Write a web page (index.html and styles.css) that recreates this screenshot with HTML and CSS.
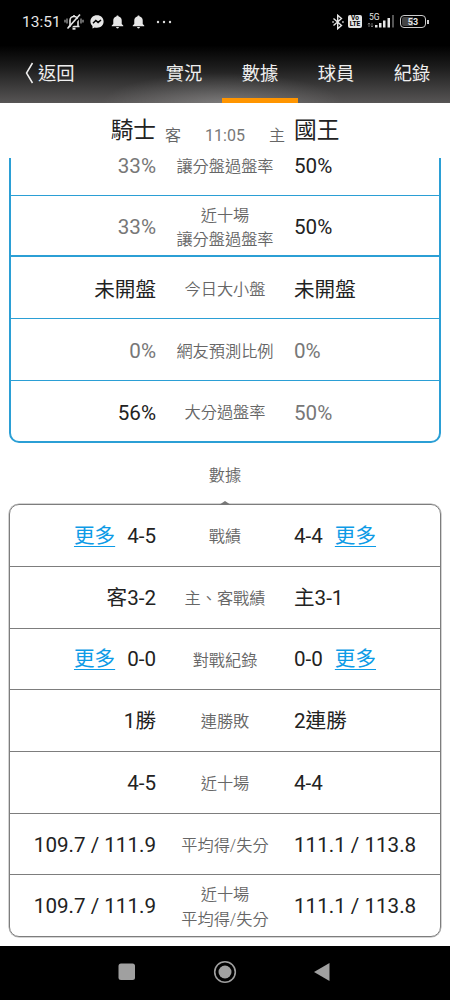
FILE: index.html
```
<!DOCTYPE html>
<html lang="zh-Hant">
<head>
    <meta charset="utf-8">
    <title>騎士 - 國王 數據</title>
    <link rel="stylesheet" href="styles.css">
</head>
<body>
    <header class="top">
        <div class="status-bar">
            <span class="clock">13:51</span>
            <svg class="ico-mute" width="20" height="18" viewBox="0 0 20 18" fill="none" stroke="#e6e6e6" stroke-width="1.6">
                <path d="M4.5 13.5h11M6 13V7.5a4 4 0 0 1 8 0V13M10 3.5V2"/>
                <path d="M8.5 15.7h3" stroke-width="2"/>
                <path d="M3 5.5v5M1 6.8v2.6M17 5.5v5M19 6.8v2.6" stroke-width="1.2" stroke="#aaa"/>
                <path d="M17.5 2.5L5 16.5" stroke="#000"/>
                <path d="M16 1.5L3.5 15.5"/>
            </svg>
            <svg class="ico-msg" width="14" height="14" viewBox="0 0 14 14">
                <path fill="#e6e6e6" d="M7 .3C3.1.3.4 3 .4 6.5c0 1.9.8 3.4 2.1 4.5v2.5l2.2-1.1c.7.2 1.5.3 2.3.3 3.9 0 6.6-2.7 6.6-6.2S10.9.3 7 .3z"/>
                <path fill="none" stroke="#000" stroke-width="1.5" d="M3 8.2l2.8-2.8 2.3 2L11 5"/>
            </svg>
            <svg class="ico-bell" width="13" height="14" viewBox="0 0 12 14" preserveAspectRatio="none" fill="#e6e6e6">
                <path d="M6 .5c.7 0 1 .4 1 1 2 .5 2.9 2 2.9 4V9l1.4 1.5v.8H.7v-.8L2.1 9V5.5c0-2 .9-3.5 2.9-4 0-.6.3-1 1-1zM4.7 12.1h2.6c0 .8-.5 1.300-1.300 1.300s-1.300-.5-1.300-1.300z"/>
            </svg>
            <svg class="ico-bell" width="13" height="14" viewBox="0 0 12 14" preserveAspectRatio="none" fill="#e6e6e6">
                <path d="M6 .5c.7 0 1 .4 1 1 2 .5 2.9 2 2.9 4V9l1.4 1.5v.8H.7v-.8L2.1 9V5.5c0-2 .9-3.5 2.9-4 0-.6.3-1 1-1zM4.7 12.1h2.6c0 .8-.5 1.300-1.300 1.300s-1.300-.5-1.300-1.300z"/>
            </svg>
            <svg class="ico-dots" width="16" height="4" viewBox="0 0 16 4" fill="#ddd">
                <circle cx="2" cy="2" r="1.2"/><circle cx="8" cy="2" r="1.2"/><circle cx="14" cy="2" r="1.2"/>
            </svg>
            <div class="status-right">
                <svg width="12" height="16" viewBox="0 0 12 16" fill="none" stroke="#e6e6e6" stroke-width="1.4">
                    <path d="M1.5 4.5l8 7-3.800 3.200V1.300l3.800 3.200-8 7"/>
                    <path d="M.3 8h1.500M10.200 8h1.500" stroke-width="1.500"/>
                </svg>
                <div class="volte"><span>Vo</span><span>LTE</span></div>
                <div class="signal">
                    <span class="net">5G</span>
                    <svg width="28" height="13" viewBox="0 0 28 13" fill="#e6e6e6">
                        <path d="M2 12V8M.8 9.300L2 8l1.200 1.300M5 8v4M3.900 10.800L5 12l1.200-1.200" fill="none" stroke="#888" stroke-width=".8"/>
                        <rect x="8" y="10" width="2.5" height="2.5"/>
                        <rect x="12" y="8" width="2.5" height="4.5"/>
                        <rect x="16" y="5.5" width="2.5" height="7"/>
                        <rect x="20.5" y="3" width="2.5" height="9.5"/>
                        <rect x="25" y="0" width="2" height="12.5" fill="#555"/>
                    </svg>
                </div>
                <div class="battery"><span>53</span></div>
            </div>
        </div>
        <nav class="nav">
            <a class="back">
                <svg width="9" height="22" viewBox="0 0 9 22" fill="none" stroke="#eee" stroke-width="1.5"><path d="M7.500 1L1.500 11l6 10"/></svg>
                返回
            </a>
            <a class="tab">實況</a>
            <a class="tab active">數據</a>
            <a class="tab">球員</a>
            <a class="tab">紀錄</a>
        </nav>
    </header>

    <section class="match">
        <div class="team away">騎士</div>
        <div class="info"><span>客</span><span class="time">11:05</span><span>主</span></div>
        <div class="team home">國王</div>
    </section>

    <main class="content">
        <div class="panel blue">
            <div class="row"><div class="away dim">33%</div><div class="label">讓分盤過盤率</div><div class="home">50%</div></div>
            <div class="row thick"><div class="away dim">33%</div><div class="label">近十場<br>讓分盤過盤率</div><div class="home">50%</div></div>
            <div class="row"><div class="away">未開盤</div><div class="label">今日大小盤</div><div class="home">未開盤</div></div>
            <div class="row"><div class="away dim">0%</div><div class="label">網友預測比例</div><div class="home dim">0%</div></div>
            <div class="row"><div class="away">56%</div><div class="label">大分過盤率</div><div class="home dim">50%</div></div>
        </div>

        <h2 class="title">數據</h2>

        <div class="panel gray">
            <div class="row"><div class="away"><a class="more">更多</a>4-5</div><div class="label">戰績</div><div class="home">4-4<a class="more">更多</a></div></div>
            <div class="row"><div class="away">客3-2</div><div class="label">主、客戰績</div><div class="home">主3-1</div></div>
            <div class="row"><div class="away"><a class="more">更多</a>0-0</div><div class="label">對戰紀錄</div><div class="home">0-0<a class="more">更多</a></div></div>
            <div class="row"><div class="away">1勝</div><div class="label">連勝敗</div><div class="home">2連勝</div></div>
            <div class="row"><div class="away">4-5</div><div class="label">近十場</div><div class="home">4-4</div></div>
            <div class="row"><div class="away">109.7 / 111.9</div><div class="label">平均得/失分</div><div class="home">111.1 / 113.8</div></div>
            <div class="row"><div class="away">109.7 / 111.9</div><div class="label">近十場<br>平均得/失分</div><div class="home">111.1 / 113.8</div></div>
        </div>
    </main>

    <footer class="system-nav">
        <svg width="18" height="18" viewBox="0 0 18 18"><rect x=".5" y=".5" width="16.5" height="16.5" rx="2.5" fill="#a0a0a0"/></svg>
        <svg width="24" height="24" viewBox="0 0 24 24"><circle cx="12" cy="12" r="10.3" fill="none" stroke="#a0a0a0" stroke-width="1.6"/><circle cx="12" cy="12" r="6.5" fill="#a0a0a0"/></svg>
        <svg width="18" height="20" viewBox="0 0 18 20"><path d="M16.5 1v18L1 10z" fill="#a0a0a0"/></svg>
    </footer>
</body>
</html>
```
FILE: styles.css
```
* {
    box-sizing: border-box;
}
body {
    margin: 0;
    height: 1000px;
    display: flex;
    flex-direction: column;
    overflow: hidden;
    background: #fff;
    color: #222;
    font-family: Roboto, "Noto Sans CJK TC", sans-serif;
}
svg {
    display: block;
    flex: none;
}
.top {
    height: 103px;
    flex: none;
    background:
        radial-gradient(ellipse 120px 30px at 222px 103px, rgba(255, 255, 255, 0.22), transparent),
        linear-gradient(#000 44%, #1c1c1c 65%, #575555);
}
.status-bar {
    height: 43px;
    padding: 0 24px 0 22px;
    display: flex;
    align-items: center;
    color: #e6e6e6;
}
.clock {
    width: 42px;
    font-size: 15.5px;
}
.ico-msg {
    margin-left: 6px;
}
.ico-bell {
    margin-left: 7px;
}
.ico-bell + .ico-bell {
    margin-left: 8px;
}
.ico-dots {
    margin-left: 11px;
}
.status-right {
    margin-left: auto;
    margin-right: -1px;
    display: flex;
    align-items: center;
}
.volte {
    width: 14px;
    height: 13px;
    margin-left: 4px;
    border-radius: 2px;
    background: #e6e6e6;
    color: #000;
    font-size: 6.5px;
    font-weight: 700;
    line-height: 6px;
    display: flex;
    flex-direction: column;
    align-items: center;
}
.signal {
    position: relative;
    margin-left: 5px;
}
.net {
    position: absolute;
    left: 2px;
    top: -2px;
    font-size: 8.5px;
    line-height: 8px;
}
.battery {
    position: relative;
    width: 26px;
    height: 13px;
    margin-left: 5px;
    margin-right: 1px;
    border: 1px solid #ccc;
    border-radius: 4px;
    background: linear-gradient(90deg, #444 50%, #000 50%);
    background-clip: content-box;
    padding: 1px;
    font-size: 9px;
    font-weight: 700;
    line-height: 10px;
    text-align: center;
}
.battery::after {
    content: "";
    position: absolute;
    right: -4px;
    top: 4px;
    width: 2px;
    height: 4px;
    background: #ccc;
}
.nav {
    height: 60px;
    display: flex;
    color: #eee;
    font-size: 18.3px;
    line-height: 61px;
}
.back {
    flex: 1;
    padding-left: 25px;
    display: flex;
    align-items: center;
    gap: 4px;
}
.tab {
    width: 76px;
    text-align: center;
}
.active {
    border-bottom: 5px solid #ff9500;
}
.match,
.row {
    display: grid;
    grid-template-columns: 1fr 138px 1fr;
    align-items: center;
}
.away {
    text-align: right;
}
.match {
    height: 55px;
    flex: none;
}
.team {
    font-size: 22.7px;
    line-height: 55px;
}
.info {
    padding: 6px 9px 0;
    display: flex;
    align-items: baseline;
    justify-content: space-between;
    font-size: 16px;
    font-weight: 350;
    color: #666;
}
.time {
    font-weight: 400;
    color: #777;
}
.content {
    flex: 1;
    padding: 0 9px;
    overflow: hidden;
}
.panel {
    border: 2px solid;
    border-radius: 10px;
}
.row {
    height: 61.7px;
    padding-top: 1px;
    border-bottom: 1px solid;
    border-color: inherit;
    font-size: 20.6px;
    line-height: 24px;
}
.row:last-child {
    border-bottom: 0;
    height: 60px;
}
.label {
    padding-top: 3px;
    text-align: center;
    font-size: 16.2px;
    line-height: 24.5px;
    font-weight: 350;
    color: #666;
    white-space: nowrap;
}
.dim {
    color: #777;
}
.blue {
    margin-top: -26.2px;
    border-color: #2b9fd5;
}
.blue .row {
    padding-top: 4px;
}
.blue .label {
    padding-top: 2px;
}
.thick {
    border-bottom-width: 2px;
}
.gray {
    position: relative;
    border: 1px solid #7d7d7d;
    box-shadow: 0 0 0 0.5px #aaa;
}
.gray .row:last-child {
    height: 61px;
}
.gray::before {
    content: "";
    position: absolute;
    left: 50%;
    top: -4px;
    margin-left: -6px;
    border: 6px solid transparent;
    border-top: 0;
    border-bottom: 4px solid #777;
}
.title {
    margin: 0;
    height: 61.7px;
    line-height: 65px;
    text-align: center;
    font-size: 16.2px;
    font-weight: 350;
    color: #666;
}
.more {
    margin-right: 12px;
    color: #0d9be6;
    text-decoration: underline;
    text-underline-offset: 3px;
    text-decoration-thickness: 1px;
}
.home .more {
    margin: 0 0 0 12px;
}
.system-nav {
    height: 54px;
    flex: none;
    padding: 0 119px 2px 118px;
    display: flex;
    align-items: center;
    justify-content: space-between;
    background: #000;
}
```
